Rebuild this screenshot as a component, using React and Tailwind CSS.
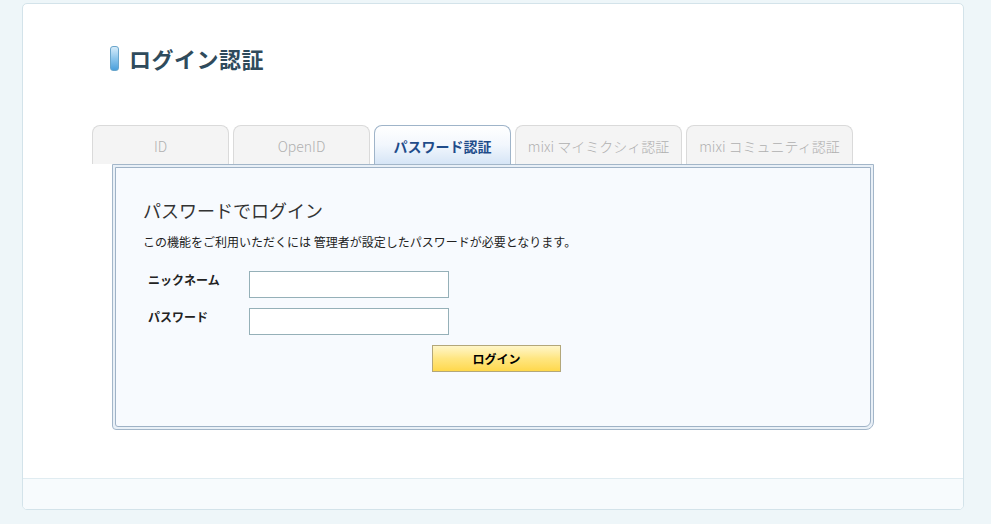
import React from 'react';

const tabs = [
    { label: 'ID', w: 'w-[137px]' },
    { label: 'OpenID', w: 'w-[137px]' },
    { label: 'パスワード認証', w: 'w-[137px]', active: true },
    { label: 'mixi マイミクシィ認証', w: 'w-[167px]' },
    { label: 'mixi コミュニティ認証', w: 'w-[167px]' },
];

const font = { fontFamily: '"Noto Sans CJK JP", "Noto Sans", sans-serif' };

export default function App() {
    return (
        <div className="w-[991px] h-[524px] bg-[#eef6f9] pl-[22px] pt-[3px] overflow-hidden" style={font}>
            <div className="w-[942px] h-[507px] bg-white border border-[#d3e3ea] rounded-[5px] flex flex-col overflow-hidden">
                <div className="flex-1">
                    {/* Title */}
                    <div className="flex items-center gap-[10px] ml-[87px] mt-[40px] h-[28px]">
                        <span className="w-[9px] h-[25px] rounded-[3px] border border-[#6aa6cc] bg-gradient-to-b from-[#d6ecfa] via-[#8cc6ec] to-[#4aa0dc]" />
                        <h1 className="text-[22px] font-bold text-[#2f4b5c] leading-none tracking-[0.5px]">ログイン認証</h1>
                    </div>

                    {/* Tabs */}
                    <div className="ml-[69px] mt-[53px] flex gap-[4px] h-[39px]">
                        {tabs.map((t) => (
                            <div
                                key={t.label}
                                className={`${t.w} h-[39px] rounded-t-[8px] border border-b-0 flex items-center justify-center text-[14px] pt-[3px] ${
                                    t.active
                                        ? 'border-[#9fb4c9] bg-gradient-to-b from-[#ffffff] via-[#f2f7fd] to-[#d6e5f6] text-[#1f4c8a] font-bold'
                                        : 'border-[#dadada] bg-[#f4f4f4] text-[#b0b0b0] font-light'
                                }`}
                            >
                                {t.label}
                            </div>
                        ))}
                    </div>

                    {/* Panel */}
                    <div className="ml-[89px] w-[762px] h-[266px] border border-[#a3b6c9] rounded-br-[8px] rounded-bl-[4px] bg-[#e9f0f7] p-[2px]">
                        <div className="w-full h-full border border-[#9fb2c6] rounded-br-[6px] rounded-bl-[3px] bg-[#f7fafe] pl-[27px] pt-[30px]">
                            <h2 className="text-[18px] text-[#333] leading-[24px]">パスワードでログイン</h2>
                            <p className="mt-[12px] text-[12px] text-[#222] leading-[16px]">
                                この機能をご利用いただくには 管理者が設定したパスワードが必要となります。
                            </p>
                            <div className="mt-[21px] flex flex-col gap-[10px]">
                                <div className="flex items-start">
                                    <label className="w-[106px] pl-[5px] text-[12px] font-bold text-[#222] leading-[16px] pt-[1px]">ニックネーム</label>
                                    <input type="text" className="w-[200px] h-[27px] bg-white border border-[#95b0b8] outline-none" />
                                </div>
                                <div className="flex items-start">
                                    <label className="w-[106px] pl-[5px] text-[12px] font-bold text-[#222] leading-[16px] pt-[1px]">パスワード</label>
                                    <input type="password" className="w-[200px] h-[27px] bg-white border border-[#95b0b8] outline-none" />
                                </div>
                            </div>
                            <button className="mt-[10px] ml-[289px] w-[129px] h-[27px] border border-[#b3a77a] bg-gradient-to-b from-[#fff6c8] via-[#ffe680] to-[#ffd84a] text-[12px] font-bold text-black">
                                ログイン
                            </button>
                        </div>
                    </div>
                </div>

                {/* Footer strip */}
                <div className="h-[31px] border-t border-[#e0ecf1] bg-[#f7fbfd]" />
            </div>
        </div>
    );
}
